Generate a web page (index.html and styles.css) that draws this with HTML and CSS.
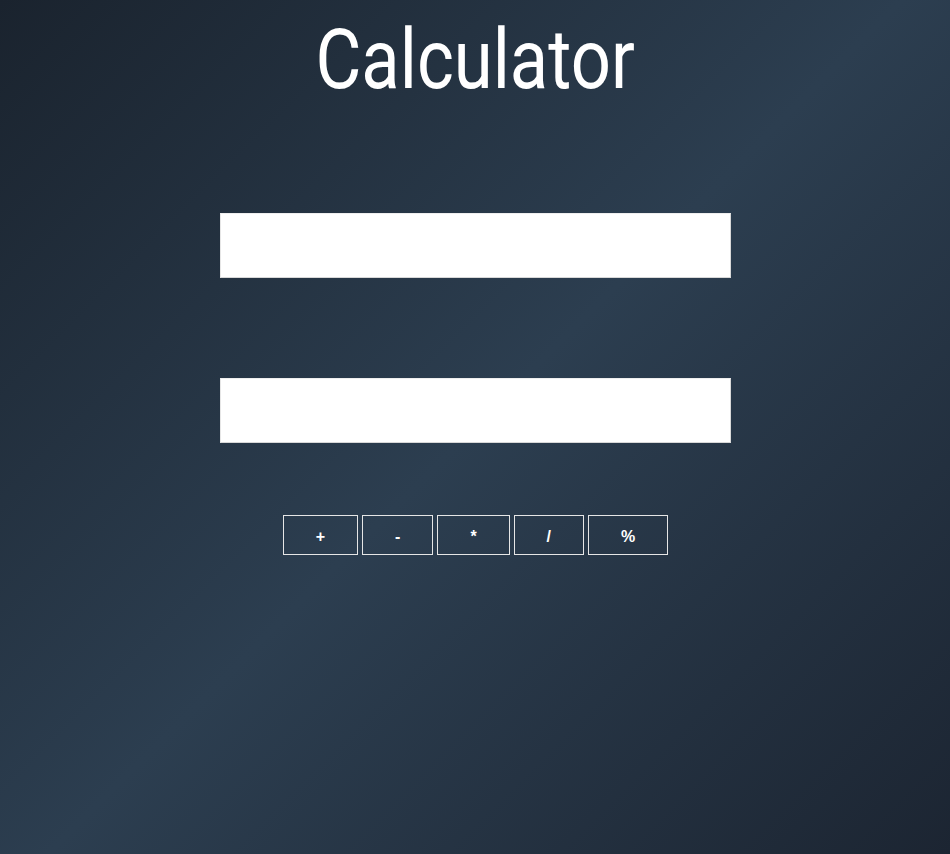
FILE: index.html
```html
<!DOCTYPE html>
<html>
<head>
<meta charset="utf-8">
<link rel="stylesheet" href="styles.css">
</head>
<body>
<div class="page">
  <h1 class="title"><span class="title-text">Calculator</span></h1>
  <div class="fields">
    <input class="field" type="text">
    <input class="field" type="text">
  </div>
  <div class="ops">
    <button class="op">+</button>
    <button class="op">-</button>
    <button class="op">*</button>
    <button class="op">/</button>
    <button class="op">%</button>
  </div>
</div>
</body>
</html>
```

FILE: styles.css
```css
html, body {
  margin: 0;
  height: 100%;
}
body {
  background: linear-gradient(135deg, #1a232e 0%, #2c3e50 50%, #1c2532 100%);
  font-family: "Liberation Sans", Arial, sans-serif;
  color: #fff;
}
.page {
  display: flex;
  flex-direction: column;
  align-items: center;
}
.title {
  margin: 12px 0 0;
  font-family: Roboto, sans-serif;
  font-weight: 400;
  font-size: 84px;
  line-height: 96px;
  text-align: center;
}
.title-text {
  display: inline-block;
  transform: scaleX(0.84);
}
.fields {
  display: flex;
  flex-direction: column;
  gap: 100px;
  margin-top: 105px;
}
.field {
  box-sizing: border-box;
  width: 511px;
  height: 65px;
  margin: 0;
  border: 1px solid #d8d8d8;
  border-top-color: #eee;
  border-left-color: #e6e6e6;
  background: #fff;
  outline: none;
}
.ops {
  margin-top: 72px;
  margin-left: 1px;
  font-size: 0;
}
.op {
  display: inline-block;
  box-sizing: border-box;
  height: 40px;
  margin: 0 2px;
  padding: 4px 32px 0;
  background: transparent;
  border: 1px solid #e6e6e6;
  color: #fff;
  font-family: "Liberation Sans", Arial, sans-serif;
  font-weight: 700;
  font-size: 16px;
}
```
